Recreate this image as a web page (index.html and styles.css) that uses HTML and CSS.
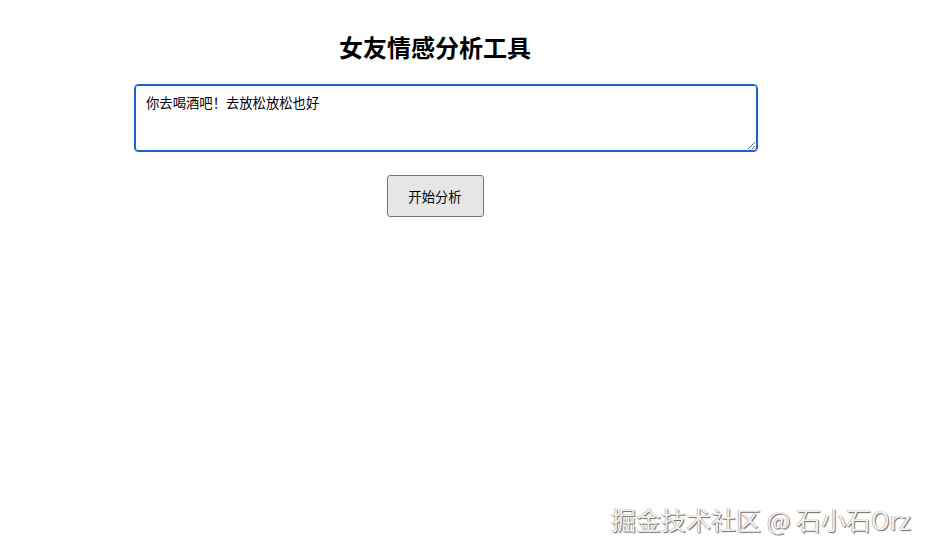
FILE: index.html
```html
<!DOCTYPE html>
<html lang="zh-CN">
<head>
<meta charset="utf-8">
<title>女友情感分析工具</title>
<link rel="stylesheet" href="styles.css">
</head>
<body>
<div class="page">
  <div class="container">
    <h1 class="title">女友情感分析工具</h1>
    <textarea class="input" autofocus>你去喝酒吧！去放松放松也好</textarea>
    <div class="actions">
      <button class="btn" type="button">开始分析</button>
    </div>
  </div>
  <div class="watermark">掘金技术社区 @ 石小石Orz</div>
</div>
</body>
</html>
```
FILE: styles.css
```css
html, body {
  margin: 0;
  padding: 0;
  background: #ffffff;
}
body {
  font-family: "Liberation Sans", "Noto Sans CJK SC", sans-serif;
  color: #000;
}
.page {
  width: 929px;
  height: 551px;
  position: relative;
  overflow: hidden;
}
.container {
  width: 600px;
  margin-left: 135px;
  padding-top: 33px;
}
.title {
  margin: 0 0 24px 0;
  text-align: center;
  font-size: 24px;
  line-height: 28px;
  font-weight: bold;
  font-family: "Noto Sans CJK SC", sans-serif;
}
.input {
  display: block;
  width: 600px;
  height: 45px;
  margin: 0;
  padding: 9px 10px 10px 10px;
  border: 1px solid #1b64c2;
  border-radius: 3px;
  outline: 1px solid #1b64c2;
  font-family: "Noto Sans CJK SC", sans-serif;
  font-size: 13.33px;
  line-height: 16px;
  color: #000;
  resize: vertical;
  background: #fff;
}
.actions {
  display: flex;
  justify-content: center;
  margin-top: 24px;
}
.btn {
  width: 97px;
  height: 42px;
  padding: 0;
  border: 1px solid #767676;
  border-radius: 3px;
  background: #e6e6e6;
  font-family: "Noto Sans CJK SC", sans-serif;
  font-size: 13.33px;
  color: #000;
}
.watermark {
  position: absolute;
  right: 18px;
  bottom: 17px;
  font-family: "Noto Sans CJK SC", sans-serif;
  font-size: 25px;
  line-height: 30px;
  color: #f2f2f2;
  text-shadow: 1px 1px 1px #6a6a6a, -0.5px -0.5px 0.5px #9a9a9a;
  white-space: nowrap;
}
```
